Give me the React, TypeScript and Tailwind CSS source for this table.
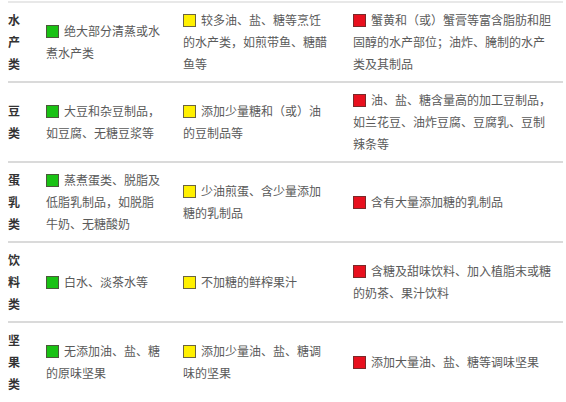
import React from 'react'

type Level = 'green' | 'yellow' | 'red'

const ROWS: { cat: string; green: string; yellow: string; red: string }[] = [
  {
    cat: '水产类',
    green: '绝大部分清蒸或水煮水产类',
    yellow: '较多油、盐、糖等烹饪的水产类，如煎带鱼、糖醋鱼等',
    red: '蟹黄和（或）蟹膏等富含脂肪和胆固醇的水产部位；油炸、腌制的水产类及其制品',
  },
  {
    cat: '豆类',
    green: '大豆和杂豆制品，如豆腐、无糖豆浆等',
    yellow: '添加少量糖和（或）油的豆制品等',
    red: '油、盐、糖含量高的加工豆制品，如兰花豆、油炸豆腐、豆腐乳、豆制辣条等',
  },
  {
    cat: '蛋乳类',
    green: '蒸煮蛋类、脱脂及低脂乳制品，如脱脂牛奶、无糖酸奶',
    yellow: '少油煎蛋、含少量添加糖的乳制品',
    red: '含有大量添加糖的乳制品',
  },
  {
    cat: '饮料类',
    green: '白水、淡茶水等',
    yellow: '不加糖的鲜榨果汁',
    red: '含糖及甜味饮料、加入植脂末或糖的奶茶、果汁饮料',
  },
  {
    cat: '坚果类',
    green: '无添加油、盐、糖的原味坚果',
    yellow: '添加少量油、盐、糖调味的坚果',
    red: '添加大量油、盐、糖等调味坚果',
  },
]

function Square({ level }: { level: Level }) {
  if (level === 'green')
    return <span className="mr-[5px] inline-block h-[13px] w-[13px] translate-y-[2px] border border-[#4a5a3a] bg-[#19c214]" />
  if (level === 'yellow')
    return <span className="mr-[5px] inline-block h-[13px] w-[13px] translate-y-[2px] border border-[#6b6440] bg-[#fff000]" />
  return <span className="mr-[5px] inline-block h-[13px] w-[13px] translate-y-[2px] border border-[#7a2a2a] bg-[#e8101e]" />
}

function Cell({ level, text, width }: { level: Level; text: string; width: string }) {
  return (
    <div className="flex items-center py-[6px]">
      <p className={`${width} text-[12px] leading-[22px] text-[#5a5a5a]`}>
        <Square level={level} />
        {text}
      </p>
    </div>
  )
}

export default function App() {
  return (
    <main
      className="min-h-[402px] bg-white pt-[1px] pl-[8px]"
      style={{ fontFamily: '"Noto Sans CJK SC", "Noto Sans", sans-serif' }}
    >
      <div className="w-[555px] border-t-2 border-[#e8e8e8]">
        {ROWS.map((row, i) => (
          <div
            key={row.cat}
            className={`grid grid-cols-[38px_137px_170px_210px] ${i < ROWS.length - 1 ? 'border-b-2 border-[#dadada]' : ''}`}
          >
            <div className="flex flex-col justify-center py-[6px] text-[12px] font-bold leading-[22px] text-[#333]">
              {row.cat.split('').map((ch, j) => (
                <span key={j}>{ch}</span>
              ))}
            </div>
            <Cell level="green" text={row.green} width="w-[116px]" />
            <Cell level="yellow" text={row.yellow} width="w-[148px]" />
            <Cell level="red" text={row.red} width="w-[200px]" />
          </div>
        ))}
      </div>
    </main>
  )
}
